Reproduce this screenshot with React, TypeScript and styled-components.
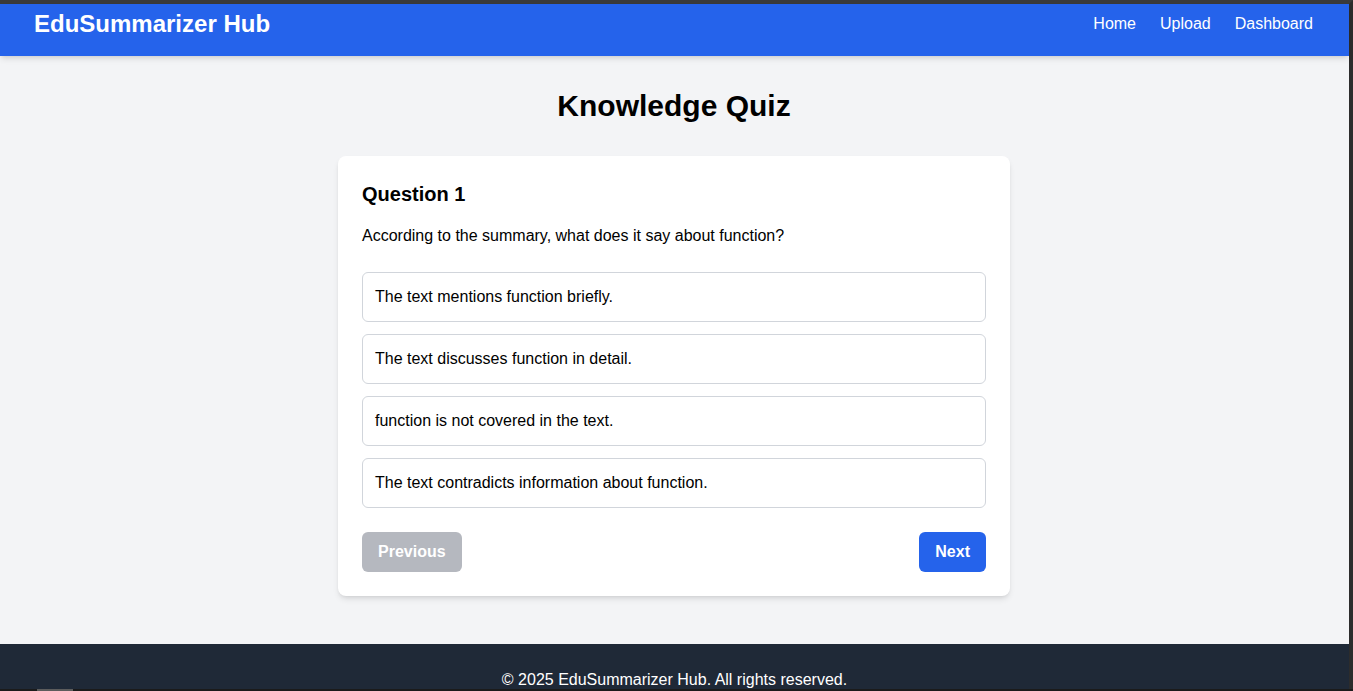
import React from "react";
import styled, { createGlobalStyle } from "styled-components";

const Global = createGlobalStyle`
  html, body { margin: 0; padding: 0; overflow: hidden; }
  body {
    font-family: "Liberation Sans", Arial, sans-serif;
    background: #f3f4f6;
    color: #000;
  }
  * { box-sizing: border-box; }
`;

const Frame = styled.div`
  display: flex;
  flex-direction: column;
  min-height: 100vh;
  border-top: 4px solid #3a3a3a;
  border-right: 4px solid #2c2c2c;
  background: #f3f4f6;
`;

const NavBar = styled.header`
  display: flex;
  align-items: center;
  justify-content: space-between;
  height: 52px;
  padding: 0 36px 13px 34px;
  background: #2563eb;
  color: #fff;
  box-shadow: 0 4px 6px -1px rgba(0, 0, 0, 0.1), 0 2px 4px -2px rgba(0, 0, 0, 0.1);
  position: relative;
  z-index: 1;
`;

const Logo = styled.div`
  font-size: 24px;
  line-height: 32px;
  font-weight: 700;
`;

const NavLinks = styled.nav`
  display: flex;
  gap: 24px;
`;

const NavLink = styled.a`
  color: #fff;
  text-decoration: none;
  font-size: 16px;
  line-height: 24px;
`;

const Main = styled.main`
  flex: 1;
  padding: 32px 17px 48px 16px;
  display: flex;
  flex-direction: column;
  align-items: center;
`;

const Title = styled.h1`
  margin: 0 0 32px;
  font-size: 30px;
  line-height: 36px;
  font-weight: 700;
  text-align: center;
`;

const Card = styled.section`
  width: 100%;
  max-width: 672px;
  background: #fff;
  border-radius: 8px;
  padding: 24px;
  box-shadow: 0 4px 6px -1px rgba(0, 0, 0, 0.1), 0 2px 4px -2px rgba(0, 0, 0, 0.1);
`;

const QuestionTitle = styled.h2`
  margin: 0 0 16px;
  font-size: 20px;
  line-height: 28px;
  font-weight: 700;
`;

const QuestionText = styled.p`
  margin: 0 0 24px;
  font-size: 16px;
  line-height: 24px;
`;

const Options = styled.div`
  display: flex;
  flex-direction: column;
  gap: 12px;
`;

const Option = styled.button`
  display: block;
  width: 100%;
  text-align: left;
  padding: 12px;
  border: 1px solid #d1d5db;
  border-radius: 6px;
  background: #fff;
  font-family: inherit;
  font-size: 16px;
  line-height: 24px;
  color: #000;
  cursor: pointer;
`;

const Actions = styled.div`
  display: flex;
  justify-content: space-between;
  margin-top: 24px;
`;

const NavButton = styled.button<{ $disabled?: boolean }>`
  padding: 8px 16px;
  border: none;
  border-radius: 6px;
  font-family: inherit;
  font-size: 16px;
  line-height: 24px;
  font-weight: 700;
  color: #fff;
  background: ${(p) => (p.$disabled ? "#b5b8bf" : "#2563eb")};
  cursor: ${(p) => (p.$disabled ? "not-allowed" : "pointer")};
`;

const Footer = styled.footer`
  background: #1f2937;
  color: #fff;
  text-align: center;
  padding: 24px 16px;
  font-size: 16px;
  line-height: 24px;
`;

const HScrollbar = styled.div`
  position: fixed;
  left: 0;
  right: 0;
  bottom: 0;
  height: 2px;
  background: #1b1b1b;
  z-index: 10;
`;

const HThumb = styled.div`
  margin-left: 37px;
  width: 36px;
  height: 2px;
  background: #5c5c5c;
`;

const options = [
  "The text mentions function briefly.",
  "The text discusses function in detail.",
  "function is not covered in the text.",
  "The text contradicts information about function.",
];

export default function App() {
  return (
    <>
      <Global />
      <Frame>
        <NavBar>
          <Logo>EduSummarizer Hub</Logo>
          <NavLinks>
            <NavLink href="#">Home</NavLink>
            <NavLink href="#">Upload</NavLink>
            <NavLink href="#">Dashboard</NavLink>
          </NavLinks>
        </NavBar>
        <Main>
          <Title>Knowledge Quiz</Title>
          <Card>
            <QuestionTitle>Question 1</QuestionTitle>
            <QuestionText>According to the summary, what does it say about function?</QuestionText>
            <Options>
              {options.map((o) => (
                <Option key={o}>{o}</Option>
              ))}
            </Options>
            <Actions>
              <NavButton $disabled>Previous</NavButton>
              <NavButton>Next</NavButton>
            </Actions>
          </Card>
        </Main>
        <Footer>© 2025 EduSummarizer Hub. All rights reserved.</Footer>
      </Frame>
      <HScrollbar>
        <HThumb />
      </HScrollbar>
    </>
  );
}
